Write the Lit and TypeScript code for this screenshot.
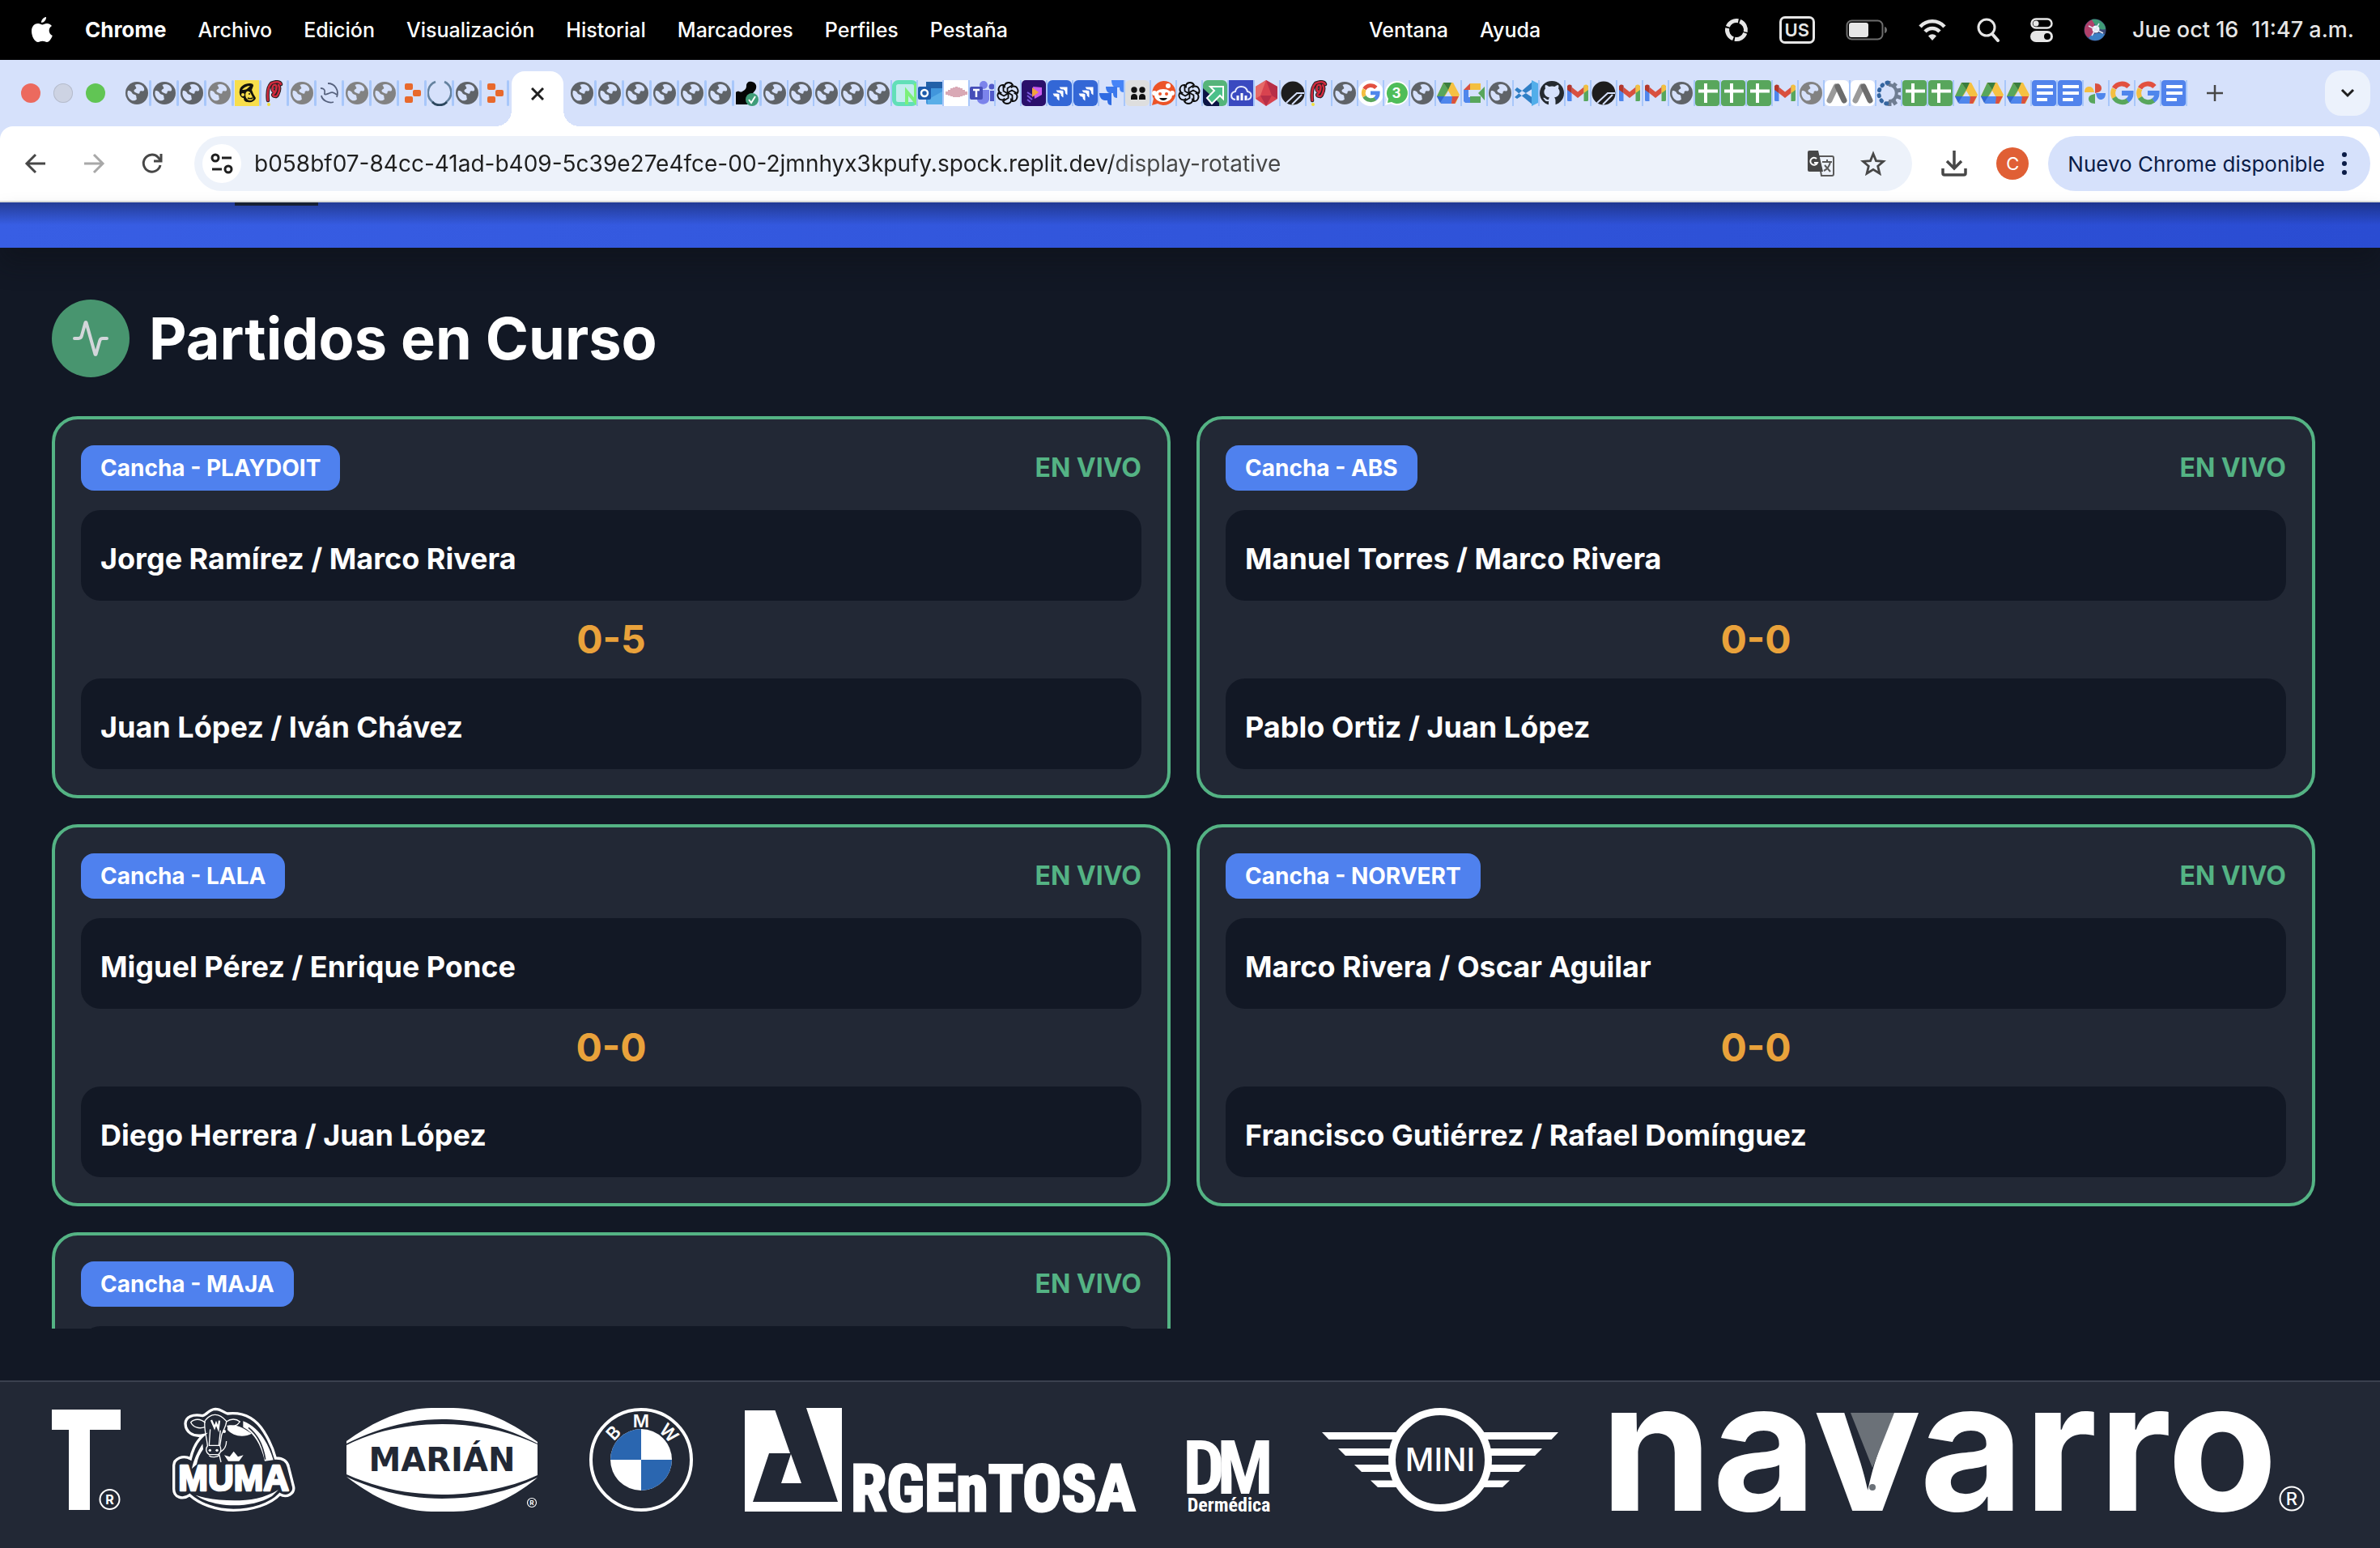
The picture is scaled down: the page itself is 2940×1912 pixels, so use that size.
import { LitElement, html, svg, css, type TemplateResult } from "lit";
import { customElement, property } from "lit/decorators.js";

type Glyph = TemplateResult;

const globe = (fill: string) => svg`
  <circle cx="15" cy="16" r="14" fill=${fill} />
  <path d="M4 13c2 0 4 .5 5 2.500s2 2 4 2.500c2 1 1 3 2 5.500-2 2-5 2.500-7 1C4 22 2.500 17 4 13z" fill="#d6e1fb" />
  <path d="M12.500 6c4-2 9-.5 11 3 1.500 3 .5 5-2 4.500-2-.5-3 .5-3 2s-2 1.500-3.500.5-3-1-3.500-2.500 1.500-2.500 2.500-3-.5-2.500-1.500-4.500z" fill="#d6e1fb" />`;

const gmail = svg`
  <path d="M2 7h5.500v19H3.500A1.500 1.500 0 0 1 2 24.500z" fill="#4f86ec" />
  <path d="M22.500 7H28v17.500a1.500 1.500 0 0 1-1.500 1.500h-4z" fill="#58a65c" />
  <path d="M7.500 8.500 15 14.500l7.500-6V16L15 22l-7.500-6z" fill="#d9503f" />
  <path d="M2 8c0-2.500 3-3.500 5.500-1.500V16L2 12z" fill="#b4372b" />
  <path d="M28 8c0-2.500-3-3.500-5.500-1.500V16l5.500-4z" fill="#f2bf42" />`;

const sheets = svg`
  <rect width="30" height="32" rx="4" fill="#58a65c" />
  <path d="M13 4v24M4 13.500h24" stroke="#fff" stroke-width="4" />`;

const docs = svg`
  <rect width="30" height="32" rx="4" fill="#5183ec" />
  <path d="M6 8h20M6 16h20M6 24h13" stroke="#fff" stroke-width="4" />`;

const drive = svg`
  <path d="M9 3h12l8 15-5 11H6L1 20z" fill="#f6c142" />
  <path d="M9 3 15 12 10 20H1z" fill="#58a65c" />
  <path d="M9 3h10l-4 9z" fill="#3a7d3e" />
  <path d="M10 20h-9l5 9h13l2-9z" fill="#4f86ec" />
  <path d="M20 20h8l-5 9h-4z" fill="#d9503f" />
  <path d="M1 20h9l-5 8z" fill="#3268d0" />
  <path d="M15 13l4 7h-8z" fill="#d6e1fb" />`;

const google = svg`
  <g fill="none" stroke-width="6">
    <path d="M5.500 10A11.500 11.500 0 0 1 23.500 8" stroke="#e2503f" />
    <path d="M5.500 10.500a12 12 0 0 0 0 11" stroke="#f4bf40" />
    <path d="M5.500 21.500a12 12 0 0 0 17 3.500" stroke="#58a65c" />
    <path d="M15 16h11.500c0 4-1.500 7-4.500 9.200" stroke="#4f86ec" />
  </g>`;

const openai = svg`
  <g fill="none" stroke="#0b0b0b" stroke-width="1.800">
    ${[0, 60, 120, 180, 240, 300].map(
      (a) => svg`<path d="M11 9.500V6c2-4 8-4 10 0l-6.500 4v6" transform=${`rotate(${a} 15 16)`} />`
    )}
  </g>`;

const pinwheel = svg`
  <path d="M14 4c6 0 8 3 8 6s-2 5-8 6z" fill="#d9503f" />
  <path d="M27 16c0 6-3 8-6 8s-5-2-6-8z" fill="#4f86ec" />
  <path d="M14 29c-6 0-8-3-8-6s2-5 8-6z" fill="#58a65c" />
  <path d="M1 15c0-6 3-7 6-7s5 2 6 7z" fill="#f4bf40" />`;

const jira = svg`
  <rect width="30" height="32" rx="6" fill="#3367d6" />
  <path d="M14 8h11v11c-3-1-4-3-4-6-4 0-6-2-7-5zM10 12h10v10c-3-1-4-3-4-5-3 0-5-2-6-5zM6 16h9v10c-3-1-4-3-4-5-3 0-4-2-5-5z" fill="#fff" stroke="#3367d6" />`;

const jiraOpen = svg`
  <path d="M15 0h15v15c-4 0-5-3-5-6h-4c-4 0-6-4-6-9z" fill="#4684f7" />
  <path d="M8 8h14v14c-4 0-5-3-5-6h-4c-3 0-5-4-5-8z" fill="#3b78ec" />
  <path d="M0 16h15v15c-4 0-5-3-5-6H7c-4 0-7-4-7-9z" fill="#2f6be2" />`;

const ball = svg`
  <circle cx="15" cy="16" r="14.500" fill="#1d1d1d" />
  <path d="M7 28 20 16h9M14 30l12-12" stroke="#d6e1fb" stroke-width="2" fill="none" />`;

const redP = svg`
  <path d="M7 25C6 16 7 8 11 4M11 4c6-3 11-2 12 1M14 14c-3-3-1-9 2-8s1 9-2 11 3 5 5 1 3-9 1-12" fill="none" stroke="#231f20" stroke-width="4.500" stroke-linecap="round" />
  <path d="M7 25C6 16 7 8 11 4M11 4c6-3 11-2 12 1M14 14c-3-3-1-9 2-8s1 9-2 11 3 5 5 1 3-9 1-12" fill="none" stroke="#d02a3e" stroke-width="2.500" stroke-linecap="round" />
  <circle cx="8" cy="30" r="2" fill="#f2e13c" />`;

const replit = svg`
  <g fill="#e8692c">
    <rect x="6" y="4" width="10" height="8" rx="2" />
    <rect x="16" y="12" width="10" height="8" rx="2" />
    <rect x="6" y="20" width="10" height="8" rx="2" />
  </g>`;

const arrowhead = svg`
  <rect width="30" height="32" rx="6" fill="#fff" />
  <path d="M6 25 14 8" stroke="#9a9a9a" stroke-width="7" stroke-linecap="round" />
  <path d="M16 8l8 17" stroke="#6c6c6c" stroke-width="7" stroke-linecap="round" />`;

const ICONS: Record<string, Glyph> = {
  globe: globe("#5f6368"),
  globeOld: globe("#828282"),
  gmail,
  sheets,
  docs,
  drive,
  google,
  googleRound: svg`<circle cx="15" cy="16" r="16" fill="#fff" /><g transform="translate(3 3) scale(.8)">${google}</g>`,
  openai,
  pinwheel,
  jira,
  jiraOpen,
  ball,
  redP,
  replit,
  arrowhead,
  chimp: svg`
    <rect width="30" height="32" fill="#f8de4b" />
    <path d="M6 13c0-5 6-9 12-9 4 0 5 1 5 3l-2 5 2 5 3 5c-1 4-6 6-10 5-3 0-5-2-5-5-4 0-6-6-5-9z" fill="#14130c" />
    <path d="M9 12c2-3 6-5 10-5l-3 3c-2 2-5 2-7 2z" fill="#f8de4b" />
    <path d="M15 14c3-1 4 1 5 3l3 6c-1 2-5 3-7 1-3-2-4-8-1-10z" fill="#f8de4b" />
    <circle cx="10" cy="18" r="2" fill="#f8de4b" />
    <path d="M16 22c2 1 4 1 6 0M18 16v2" stroke="#14130c" stroke-width="1.500" />`,
  squiggle: svg`
    <g fill="none" stroke="#56617d" stroke-width="1.800">
      <path d="M4 10c4 0 6 2 5 6-1 3 3 1 6 0 4-2 6 0 9 2" />
      <path d="M13 4c9 0 14 9 11 17M5 19c1 6 9 10 15 8" />
    </g>`,
  ring: svg`
    <path d="M10 2A14.500 14.500 0 0 0 8 28M21 2a14.500 14.500 0 0 1 2 25" fill="none" stroke="#64829f" stroke-width="2.500" />
    <path d="M6 27c5 5 13 5 18 0" fill="none" stroke="#2c475e" stroke-width="3" />`,
  wrench: svg`
    <path d="M1 15c4-3 5 1 8-1s5-3 5-7 3-6 7-5 6 4 5 8-5 6-6 9v11H1z" fill="#050505" />
    <circle cx="21" cy="24" r="8" fill="#3f9c78" />
    <path d="M17 24l3 4 5-8" fill="none" stroke="#fff" stroke-width="2" />`,
  neon: svg`
    <rect x="2.500" y="2.500" width="27" height="27" rx="5" fill="#c3ecef" stroke="#62dfb8" stroke-width="5" />
    <path d="M18 30V14l11 13V4" fill="none" stroke="#7bf07b" stroke-width="4" />`,
  outlook: svg`
    <rect x="10" y="2" width="20" height="28" rx="2" fill="#4196dc" />
    <path d="M10 2h20v8H10z" fill="#2361a8" />
    <path d="M30 14 12 24v6h18z" fill="#59aee8" />
    <rect y="8" width="16" height="16" rx="2" fill="#1d5aab" />
    <circle cx="8" cy="16" r="4" fill="none" stroke="#fff" stroke-width="2.500" />`,
  bars: svg`
    <rect width="30" height="32" fill="#fff" />
    <path d="M2 14h3v4H2zM5 12h3v7H5zM8 10h3v10H8zM11 9h3v12h-3zM14 8h3v13h-3zM17 9h3v12h-3zM20 10h3v10h-3zM23 12h3v7h-3zM26 14h3v4h-3z" fill="#d9a9b5" />`,
  teams: svg`
    <circle cx="17" cy="6" r="5" fill="#7b83eb" />
    <circle cx="27" cy="8" r="3.500" fill="#5059c9" />
    <path d="M9 12h15v12c-2 8-14 7-15 0z" fill="#7b83eb" />
    <path d="M25 13h5v13h-5z" fill="#5059c9" />
    <rect y="8" width="16" height="16" rx="2" fill="#464eb8" />
    <path d="M4 12h8M8 12v9" stroke="#fff" stroke-width="2.500" />`,
  play: svg`
    <rect width="30" height="32" rx="5" fill="#2a0f6b" />
    <path d="M14 8l11 1 0 9-9 5z" fill="#c95af0" />
    <path d="M13 9l8 6-8 6z" fill="#f2a33c" />
    <path d="M7 15l6 4M7 19l6 5M7 24l4 3" stroke="#7c5ae0" stroke-width="2" />`,
  people: svg`
    <rect width="30" height="32" rx="6" fill="#dedede" />
    <g fill="#111"><circle cx="11" cy="12" r="3.700" /><circle cx="21" cy="12" r="3.700" /><path d="M7 24v-3a4 4 0 0 1 8 0v3zM17 24v-3a4 4 0 0 1 8 0v3z" /></g>`,
  reddit: svg`
    <path d="M15 1a15 15 0 1 1-7 28l-7 2 2-8A15 15 0 0 1 15 1z" fill="#ec5429" />
    <ellipse cx="15" cy="19" rx="11" ry="8" fill="#fff" />
    <circle cx="21" cy="7" r="3" fill="#fff" /><circle cx="4" cy="16" r="3" fill="#fff" /><circle cx="26" cy="16" r="3" fill="#fff" />
    <circle cx="11" cy="17" r="2" fill="#ec5429" /><circle cx="19" cy="17" r="2" fill="#ec5429" />
    <path d="M10 22h10c-2 4-8 4-10 0z" fill="#111" />`,
  arrow: svg`
    <rect width="30" height="32" rx="6" fill="#55b47a" />
    <path d="M0 10 20 28v4H6a6 6 0 0 1-6-6z" fill="#0c1445" />
    <path d="M9 8h16v15l-4-4-10 10-6-7 9-9z" fill="#4cc08a" stroke="#fff" stroke-width="2" />`,
  cloud: svg`
    <rect width="30" height="32" fill="#3a49c0" />
    <path d="M8 24c-7-1-6-9 0-10 1-8 13-8 15 0 6 1 6 9 0 10" fill="none" stroke="#e8ebff" stroke-width="2" />
    <path d="M11 25v-6M16 25v-9M21 25v-6" stroke="#fff" stroke-width="3" />`,
  gem: svg`
    <path d="M14 0 28 8v15L14 32 1 23V8z" fill="#d8434f" />
    <path d="M14 0l7 19 7 4V8zM14 32l7-13H7z" fill="#b72f48" />
    <path d="M14 0 7 19 1 23V8z" fill="#e66a68" />`,
  chat: svg`
    <path d="M15 1a15 15 0 1 1-7 28l-7 2 2-7A15 15 0 0 1 15 1z" fill="#fff" />
    <path d="M15 3a13 13 0 1 1-6 24l-5 1 1-5A13 13 0 0 1 15 3z" fill="#4fbd59" />
    <text x="15" y="22" text-anchor="middle" font-size="17" font-weight="700" fill="#fff">3</text>`,
  meet: svg`
    <path d="M2 12 10 4v8z" fill="#d9503f" />
    <path d="M10 4h13v8H10z" fill="#f4bf40" />
    <path d="M2 12h6v9H2zM2 21h8v7H4l-2-2z" fill="#4f86ec" />
    <path d="M10 20h13v8H10zM20 16l8-8v17z" fill="#58a65c" />`,
  code: svg`
    <path d="M1 12 24 31v-9L4 9zM1 21 24 1v9L4 23z" fill="#2f7fc6" />
    <path d="M22 0l8 4v24l-8 4z" fill="#52aeea" />`,
  octocat: svg`
    <circle cx="15" cy="16" r="15" fill="#24292f" />
    <path d="M11 31v-5c-5 1-5-3-7-4 3-1 4 3 7 2 0-1 .5-2 1-2.500-7-1-8-8-5-11-.5-2-.5-3 0-4.500 2 0 3.500 1.500 4.500 2 2.500-.7 5-.7 7 0 1-.5 2.500-2 4.500-2 .5 1.500.5 2.500 0 4.500 3 3 2 10-5 11 1 1 1.500 2 1.500 4V31z" fill="#d6e1fb" />`,
  gear: svg`
    <path d="M15 6c13-1 13 21 0 20" fill="none" stroke="#6f7d92" stroke-width="4" />
    <path d="M15 1v6M24 4l-4 5M31 12l-6 1M31 22l-6-2M24 30l-4-6M16 32v-6" stroke="#6f7d92" stroke-width="5" />
    <path d="M14 3C-1 6 0 27 13 29" fill="none" stroke="#34659f" stroke-width="5" stroke-dasharray="1 6" stroke-linecap="round" />`,
};

const repeatName = (name: string, n: number) => Array.from({ length: n }, () => name);

const LEFT_TABS = [
  ...repeatName("globe", 3), "globeOld", "chimp", "redP", "globeOld", "squiggle",
  "globeOld", "globeOld", "replit", "ring", "globe", "replit",
];
const MIDDLE_TABS = [...repeatName("globe", 6), "wrench"];
const RIGHT_TABS = [
  ...repeatName("globe", 5), "neon", "outlook", "bars", "teams", "openai", "play", "jira", "jira",
  "jiraOpen", "people", "reddit", "openai", "arrow", "cloud", "gem", "ball", "redP", "globe",
  "googleRound", "chat", "globe", "drive", "meet", "globe", "code", "octocat", "gmail", "ball",
  "gmail", "gmail", "globe", "sheets", "sheets", "sheets", "gmail", "globeOld", "arrowhead",
  "arrowhead", "gear", "sheets", "sheets", "drive", "drive", "drive", "docs", "docs", "pinwheel",
  "google", "google", "docs",
];

@customElement("mac-menu-bar")
class MacMenuBar extends LitElement {
  static styles = css`
    :host { display: block; background: #000; color: #fff; }
    .bar { display: flex; align-items: center; height: 74px; padding: 0 32px 0 38px; font: 500 25px/32px Inter, sans-serif; }
    .menus { display: flex; align-items: center; gap: 39px; }
    .menus button { font: inherit; color: inherit; background: none; border: 0; padding: 0; }
    .menus .app { font-weight: 700; font-size: 26px; }
    .apple { display: block; }
    .notch { flex: 1; max-width: 446px; }
    .status { display: flex; align-items: center; gap: 32px; margin-left: auto; color: #e6e6e6; }
    .status svg { display: block; }
    .extras { display: flex; align-items: center; gap: 38px; }
    .layout { border: 3px solid #e6e6e6; border-radius: 7px; font-size: 22px; line-height: 28px; padding: 0 4px; font-weight: 600; }
    .clock { display: flex; gap: 16px; font-size: 27px; }
  `;
  render() {
    const left = ["Archivo", "Edición", "Visualización", "Historial", "Marcadores", "Perfiles", "Pestaña"];
    return html`
      <nav class="bar" aria-label="Menú">
        <div class="menus">
          <svg class="apple" width="28" height="32" viewBox="0 0 28 32" fill="#fff">
            <path d="M19 0c.4 3.500-2.700 7-6 7C12.600 3.800 15.800.5 19 0z" />
            <path d="M26 11c-5 3-4 10 .8 12-1.200 3.500-4 8-6.800 8-2 0-3-1.200-5.500-1.200S11 31 9 31C5 31 1 24 1 17.500S5 8 9 8c2.200 0 4 1.400 5.300 1.400S17.500 8 20 8c2.200 0 4.500 1 6 3z" />
          </svg>
          <button class="app">Chrome</button>
          ${left.map((m) => html`<button>${m}</button>`)}
        </div>
        <div class="notch"></div>
        <div class="menus"><button>Ventana</button><button>Ayuda</button></div>
        <div class="status">
          <div class="extras">
            <svg width="30" height="30" viewBox="0 0 30 30"><circle cx="15" cy="15" r="11.500" fill="none" stroke="#e6e6e6" stroke-width="5" stroke-dasharray="16 2.060" transform="rotate(20 15 15)" /></svg>
            <span class="layout">US</span>
            <svg width="52" height="26" viewBox="0 0 52 26">
              <rect x="1.500" y="1.500" width="44" height="23" rx="6" fill="none" stroke="#6d6d6d" stroke-width="2" />
              <rect x="4" y="4" width="24" height="18" rx="3" fill="#e6e6e6" /><path d="M48 9c4 1 4 7 0 8z" fill="#6d6d6d" />
            </svg>
            <svg width="34" height="28" viewBox="0 0 34 28" fill="none" stroke="#e6e6e6" stroke-width="4.500">
              <path d="M2 10c8-9 22-9 30 0M8 16c5-5.500 13-5.500 18 0" /><path d="M17 27l-5-5.500c3-3 7-3 10 0z" fill="#e6e6e6" stroke="none" />
            </svg>
            <svg width="28" height="30" viewBox="0 0 28 30" fill="none" stroke="#e6e6e6" stroke-width="3"><circle cx="12" cy="12" r="10" /><path d="M19 20l7 8" stroke-width="4" stroke-linecap="round" /></svg>
            <svg width="28" height="30" viewBox="0 0 28 30">
              <rect x="1.500" y="1.500" width="25" height="11" rx="5.500" fill="none" stroke="#e6e6e6" stroke-width="2.500" /><circle cx="7" cy="7" r="3.500" fill="#e6e6e6" />
              <rect y="16" width="28" height="14" rx="7" fill="#e6e6e6" /><circle cx="21" cy="23" r="4" fill="#000" />
            </svg>
            <svg width="28" height="30" viewBox="0 0 28 30">
              <circle cx="14" cy="15" r="13.500" fill="#3c4a78" /><path d="M1 15a13 13 0 0 1 12-13v24C6 26 1 22 1 15z" fill="#b0406a" />
              <path d="M10 2c10-2 17 6 17 12-6 2-12-2-17-12z" fill="#3f9a76" /><path d="M6 25c6-8 16-6 20-5-4 9-14 10-20 5z" fill="#3b7fc4" />
              <circle cx="15" cy="14" r="4.500" fill="#f4f6fb" /><path d="M6 10l18 9M10 22l9-15" stroke="#dfe6f5" stroke-width="1.500" />
            </svg>
          </div>
          <time class="clock"><span>Jue oct 16</span><span>11:47 a.m.</span></time>
        </div>
      </nav>
    `;
  }
}

@customElement("browser-chrome")
class BrowserChrome extends LitElement {
  static styles = css`
    :host { display: block; background: #d6e1fb; font-family: Inter, sans-serif; border-bottom: 2px solid #dfe1df; }
    button { font: inherit; color: inherit; background: none; border: 0; padding: 0; display: block; }
    svg { display: block; }
    .strip { display: flex; height: 82px; padding: 0 12px 0 26px; align-items: center; }
    .lights { display: flex; gap: 16px; margin-right: 24px; }
    .light { width: 24px; height: 24px; border-radius: 50%; }
    .close { background: #ec6a5e; }
    .minimize { background: #cdd3e3; box-shadow: inset 0 0 0 1px #b5bccd; }
    .zoom { background: #61c554; }
    .tabs { display: flex; align-items: center; }
    .tab { display: flex; flex: none; }
    .tab::after { content: ""; width: 2px; height: 32px; background: #a8c7fa; }
    .tab.wide::after { width: 3px; margin-right: 1px; border-radius: 2px; }
    .active { position: relative; align-self: flex-end; width: 64px; height: 68px; margin: 0 8px 0 2px; border-radius: 16px 16px 0 0; background: #fff; display: grid; place-items: center; padding-bottom: 12px; box-sizing: border-box; }
    .active::before, .active::after { content: ""; position: absolute; bottom: 0; width: 20px; height: 20px; }
    .active::before { right: 100%; background: radial-gradient(circle at 0 0, transparent 20px, #fff 20px); }
    .active::after { left: 100%; background: radial-gradient(circle at 100% 0, transparent 20px, #fff 20px); }
    .plus { margin-left: 24px; }
    .search { margin-left: auto; width: 56px; height: 56px; border-radius: 20px; background: #ecf2fc; display: grid; place-items: center; }
    .toolbar { display: flex; align-items: center; height: 92px; padding: 0 12px 0 30px; background: #fff; border-radius: 16px 16px 0 0; }
    .nav { display: flex; gap: 44px; margin-right: 38px; }
    .omnibox { display: flex; flex: 1; align-items: center; height: 68px; border-radius: 34px; background: #edf2fa; padding: 0 32px 0 10px; }
    .site { width: 48px; height: 48px; border-radius: 50%; background: #fff; display: grid; place-items: center; margin-right: 16px; }
    .url { flex: 1; min-width: 0; border: 0; outline: 0; padding: 0; height: 40px; font: 400 28px/40px Inter, sans-serif; color: transparent; background: linear-gradient(90deg, #1f1f1f 1060px, #474747 1060px); -webkit-background-clip: text; background-clip: text; }
    .actions { display: flex; gap: 32px; }
    .download { margin: 0 36px; }
    .avatar { width: 40px; height: 40px; border-radius: 50%; background: #e05f35; color: #fff; font-size: 22px; line-height: 40px; margin-right: 24px; }
    .update { display: flex; align-items: center; gap: 20px; height: 68px; border-radius: 34px; background: #d6e1fb; color: #0b1c47; padding: 0 28px 0 24px; font-size: 26px; }
  `;

  private tab(name: string, wide: boolean) {
    return html`<button class="tab ${wide ? "wide" : ""}" aria-label="Pestaña"><svg width="30" height="32" viewBox="0 0 30 32">${ICONS[name]}</svg></button>`;
  }

  render() {
    return html`
      <div class="strip">
        <div class="lights"><span class="light close"></span><span class="light minimize"></span><span class="light zoom"></span></div>
        <div class="tabs">${LEFT_TABS.map((t) => this.tab(t, true))}</div>
        <button class="active" aria-label="Cerrar pestaña">
          <svg width="16" height="16" viewBox="0 0 16 16" stroke="#1f1f1f" stroke-width="3"><path d="M1 1l14 14M15 1 1 15" /></svg>
        </button>
        <div class="tabs">${MIDDLE_TABS.map((t) => this.tab(t, true))}${RIGHT_TABS.map((t) => this.tab(t, false))}</div>
        <button class="plus" aria-label="Nueva pestaña">
          <svg width="20" height="20" viewBox="0 0 20 20" stroke="#474747" stroke-width="2.500"><path d="M10 0v20M0 10h20" /></svg>
        </button>
        <button class="search" aria-label="Buscar pestañas">
          <svg width="18" height="12" viewBox="0 0 18 12" fill="none" stroke="#1f1f1f" stroke-width="3"><path d="M2 2l7 7 7-7" /></svg>
        </button>
      </div>
      <div class="toolbar">
        <div class="nav">
          <button aria-label="Atrás"><svg width="28" height="28" viewBox="0 0 28 28" fill="none" stroke="#474747" stroke-width="3"><path d="M26 14H4M14 3 3 14l11 11" /></svg></button>
          <button aria-label="Adelante"><svg width="28" height="28" viewBox="0 0 28 28" fill="none" stroke="#a8a8a8" stroke-width="3"><path d="M2 14h22M14 3l11 11-11 11" /></svg></button>
          <button aria-label="Recargar"><svg width="28" height="28" viewBox="0 0 28 28" fill="none" stroke="#474747" stroke-width="3"><path d="M24 16a10.500 10.500 0 1 1-3-10l3.500 4" /><path d="M25 2v9h-9" /></svg></button>
        </div>
        <div class="omnibox">
          <button class="site" aria-label="Información del sitio">
            <svg width="28" height="26" viewBox="0 0 28 26" fill="none" stroke="#1f1f1f" stroke-width="3"><circle cx="6" cy="6" r="4" /><path d="M14 6h12M2 20h12" /><circle cx="22" cy="20" r="4" /></svg>
          </button>
          <input class="url" aria-label="Dirección" value="b058bf07-84cc-41ad-b409-5c39e27e4fce-00-2jmnhyx3kpufy.spock.replit.dev/display-rotative" />
          <div class="actions">
            <button aria-label="Traducir">
              <svg width="34" height="34" viewBox="0 0 34 34" fill="none">
                <path d="M14 8h17a2 2 0 0 1 2 2v20a2 2 0 0 1-2 2H18z" stroke="#5a5a5a" stroke-width="2" />
                <path d="M3 1h11l6 26H3a2 2 0 0 1-2-2V3a2 2 0 0 1 2-2z" fill="#474747" />
                <path d="M12 11a4.500 4.500 0 1 0 1 5H9" stroke="#fff" stroke-width="2" />
                <path d="M19 15h12M25 12v3M29 15c-1 5-4 9-8 11M22 19l7 8" stroke="#5a5a5a" stroke-width="2" />
              </svg>
            </button>
            <button aria-label="Marcar"><svg width="32" height="32" viewBox="0 0 32 32" fill="none" stroke="#474747" stroke-width="2.800"><path d="M16 4l3.500 8.600 9.200.7-7 6 2.200 9L16 23.400 8.100 28.300l2.200-9-7-6 9.200-.7z" /></svg></button>
          </div>
        </div>
        <button class="download" aria-label="Descargas"><svg width="32" height="32" viewBox="0 0 32 32" fill="none" stroke="#474747" stroke-width="3.500"><path d="M16 0v21M7 13l9 9 9-9M2 22v6a2 2 0 0 0 2 2h24a2 2 0 0 0 2-2v-6" /></svg></button>
        <button class="avatar" aria-label="Perfil">C</button>
        <button class="update">
          Nuevo Chrome disponible
          <svg width="8" height="28" viewBox="0 0 8 28" fill="#0b1c47"><circle cx="4" cy="3" r="3" /><circle cx="4" cy="14" r="3" /><circle cx="4" cy="25" r="3" /></svg>
        </button>
      </div>
    `;
  }
}

@customElement("match-card")
class MatchCard extends LitElement {
  static styles = css`
    :host { display: block; background: #222835; border: 4px solid #54b384; border-radius: 32px; padding: 32px; }
    .top { display: flex; justify-content: space-between; align-items: center; margin-bottom: 24px; }
    .court { background: #4f81ee; color: #fff; border-radius: 16px; padding: 8px 24px; font-size: 28px; line-height: 40px; font-weight: 700; }
    .live { color: #54b384; font-size: 32px; line-height: 48px; font-weight: 700; }
    .team { background: #121825; border-radius: 24px; padding: 32px 24px 24px; font-size: 36px; line-height: 56px; font-weight: 700; color: #fff; }
    .score { text-align: center; color: #e9a23b; font-size: 48px; line-height: 64px; font-weight: 700; padding: 16px 0; }
  `;
  @property() court = "";
  @property() home = "";
  @property() away = "";
  @property() score = "";
  render() {
    return html`
      <div class="top"><span class="court">Cancha - ${this.court}</span><span class="live">EN VIVO</span></div>
      <div class="team">${this.home}</div>
      <div class="score">${this.score}</div>
      <div class="team">${this.away}</div>
    `;
  }
}

@customElement("sponsor-strip")
class SponsorStrip extends LitElement {
  static styles = css`
    :host { display: block; border-top: 2px solid #3a404e; background: #222835; }
    .row { display: flex; align-items: flex-end; gap: 64px; padding: 32px 64px 45px; }
    svg { display: block; flex: none; overflow: visible; }
    text { fill: #fff; }
    .sans { font-family: Inter, sans-serif; }
    .narrow { font-family: "Liberation Sans Narrow", "Roboto Condensed", "Liberation Sans", sans-serif; font-weight: 700; }
    .flared { font-family: "DejaVu Sans", sans-serif; font-weight: 700; fill: #222835; }
    .round { font-family: "Liberation Sans", sans-serif; font-weight: 700; }
    .navarro { font-family: Inter, sans-serif; font-weight: 700; }
  `;
  render() {
    return html`
      <footer class="row">
        <svg width="85" height="128" viewBox="0 0 85 128" role="img" aria-label="T">
          <rect y="2" width="85" height="25" fill="#fff" /><rect x="21" y="2" width="26" height="124" fill="#fff" />
          <circle cx="71.500" cy="113" r="12" fill="none" stroke="#fff" stroke-width="2" />
          <text class="sans" x="71.500" y="119" text-anchor="middle" font-size="16" font-weight="700">R</text>
        </svg>
        <svg width="151" height="128" viewBox="36 27 453 384" role="img" aria-label="Muma">
          <path d="M150 128C110 136 85 115 84 85c1-25 26-36 64-29 17-4 22-24 47-25 20 0 30 12 45 17 70-8 110 27 135 67 25 40 37 75 43 98 27-1 44 12 48 32l19 75c4 25-26 42-51 27-35 38-105 59-172 59-62 0-122-21-162-56-25 18-60 10-59-25v-85c1-25 34-40 62-25 7-30 22-65 47-87z" fill="none" stroke="#fff" stroke-width="10" />
          <path d="M298 76c52 20 90 70 112 144l-32 4c-14-60-38-104-80-126z" fill="#fff" />
          <path d="M318 100c34 26 54 66 62 118" fill="none" stroke="#222835" stroke-width="5" />
          <path d="M240 92c40-6 60 12 90 30-30 16-70 10-90-14z" fill="#fff" />
          <path d="M148 160c-20 30-34 62-40 92l18-16c4-22 12-40 24-56zM122 350c40 14 90 20 143 20 60 0 110-8 164-40l-24 24c-40 24-90 34-140 34-56 0-110-14-143-38z" fill="#fff" />
          <g fill="none" stroke="#fff" stroke-width="4">
            <path d="M156 76c8-14 24-24 38-24s30 10 42 24c0 20-14 36-18 52l-6 40c6 12 4 26-6 32h-34c-12-8-14-22-6-32-2-30-14-60-10-92z" />
            <path d="M158 82c-18-16-40-16-54-2 8 18 30 26 52 18M236 78c16-12 36-12 50 0-8 14-28 22-48 16M176 106l-4 60h36l6-56M172 204c10 8 30 6 38-2l6 26M236 150c0 22-8 32-22 40" />
            <path d="M180 72l12 28 6-16 8 20 4-30" stroke-width="7" />
          </g>
          <circle cx="175" cy="184" r="5" fill="#fff" /><circle cx="201" cy="184" r="5" fill="#fff" /><circle cx="228" cy="114" r="6" fill="#fff" />
          <path d="M228 202l20 6 15-20 16 20 20-6-16 22h-40z" fill="#fff" />
          <text class="round" x="263" y="334" text-anchor="middle" font-size="132" stroke="#fff" stroke-width="8" stroke-linejoin="round">MUMA</text>
        </svg>
        <svg width="236" height="128" viewBox="0 0 236 128" role="img" aria-label="Marián">
          <path d="M0 41C40 12 75 0 105 0h27c33 0 68 14 104 42v2C190 20 150 14 118 14 80 14 40 24 0 44zM0 46C40 26 80 20 118 20c42 0 82 8 118 25v38c-36 17-81 24-118 24-38 0-78-7-118-25zM0 85c40 19 80 27 118 27 42 0 82-8 118-26-36 30-71 42-104 42h-27C75 128 40 116 0 85z" fill="#fff" />
          <text class="flared" x="118" y="78" text-anchor="middle" font-size="40">MARIÁN</text>
          <circle cx="229" cy="117" r="5.500" fill="none" stroke="#fff" stroke-width="1.200" />
          <text class="sans" x="229" y="120" text-anchor="middle" font-size="8" font-weight="700">R</text>
        </svg>
        <svg width="128" height="128" viewBox="0 0 128 128" role="img" aria-label="BMW">
          <circle cx="64" cy="64" r="62" fill="none" stroke="#fff" stroke-width="4" />
          <circle cx="64" cy="64" r="38" fill="#fff" />
          <path d="M64 64V26a38 38 0 0 0-38 38zM64 64v38a38 38 0 0 0 38-38z" fill="#2a66b0" />
          <g class="sans" font-size="22" font-weight="600" text-anchor="middle">
            <text x="64" y="24" transform="rotate(-46 64 64)">B</text>
            <text x="64" y="24">M</text>
            <text x="64" y="24" transform="rotate(46 64 64)">W</text>
          </g>
        </svg>
        <svg width="483" height="128" viewBox="0 0 483 128" role="img" aria-label="Argentosa">
          <path d="M0 3h37.500L56 56H30L10 116h105L76 0h44v128H0zM57 57l13 36H45z" fill="#fff" />
          <text class="narrow" x="131" y="127" font-size="80" stroke="#fff" stroke-width="3">RGEnTOSA</text>
        </svg>
        <svg width="102" height="88" viewBox="0 0 102 88" role="img" aria-label="DM Dermédica">
          <text class="narrow" x="-6" y="66" font-size="92">D</text>
          <text class="narrow" x="106" y="66" text-anchor="end" font-size="92">M</text>
          <text class="narrow" x="51" y="88" text-anchor="middle" font-size="24">Dermédica</text>
        </svg>
        <svg width="292" height="128" viewBox="0 0 292 128" role="img" aria-label="Mini">
          <circle cx="146" cy="64" r="59.500" fill="none" stroke="#fff" stroke-width="9" />
          <path d="M0 30h93l-4 9H8.500zM20 50h65l-1 9H29zM40 70h44l1 9H49zM60 89.500h29l5 8.500H69zM292 30h-93l4 9h80.500zM272 50h-65l1 9h55zM252 70h-44l-1 9h36zM232 89.500h-29l-5 8.500h25z" fill="#fff" />
          <text class="sans" x="146" y="78" text-anchor="middle" font-size="39" font-weight="500">MINI</text>
        </svg>
        <svg width="858" height="128" viewBox="0 0 858 128" role="img" aria-label="Navarro">
          <text class="navarro" x="-12" y="127" font-size="222">navarro</text>
          <path d="M297 6h54l-27 68z" fill="#6b7178" /><circle cx="324" cy="98" r="4" fill="#6b7178" />
          <circle cx="842" cy="112" r="14.500" fill="none" stroke="#fff" stroke-width="2" />
          <text class="sans" x="842" y="120" text-anchor="middle" font-size="22" font-weight="500">R</text>
        </svg>
      </footer>
    `;
  }
}

@customElement("app-root")
class AppRoot extends LitElement {
  static styles = css`
    :host { display: flex; flex-direction: column; height: 100vh; overflow: hidden; background: #121825; font-family: Inter, sans-serif; color: #fff; }
    .banner { position: relative; height: 56px; flex: none; padding-left: 290px; box-sizing: border-box; background: linear-gradient(180deg, rgba(16, 28, 74, 0.5), rgba(16, 28, 74, 0) 28px), linear-gradient(90deg, #385ee4, #2a4cd2); box-shadow: 0 20px 30px rgba(12, 14, 20, 0.4); }
    .logo-edge { width: 103px; height: 4px; background: #172033; }
    .stage { flex: 1; min-height: 0; padding: 64px 80px 64px 64px; display: flex; }
    .viewport { flex: 1; overflow: hidden; }
    .title { display: flex; align-items: center; gap: 24px; margin-bottom: 48px; }
    .pulse { width: 96px; height: 96px; border-radius: 50%; background: #48956f; display: grid; place-items: center; }
    h1 { margin: 0; font-size: 72px; line-height: 80px; font-weight: 700; }
    .matches { display: grid; grid-template-columns: 1fr 1fr; gap: 32px; }
  `;
  private matches = [
    { court: "PLAYDOIT", home: "Jorge Ramírez / Marco Rivera", away: "Juan López / Iván Chávez", score: "0-5" },
    { court: "ABS", home: "Manuel Torres / Marco Rivera", away: "Pablo Ortiz / Juan López", score: "0-0" },
    { court: "LALA", home: "Miguel Pérez / Enrique Ponce", away: "Diego Herrera / Juan López", score: "0-0" },
    { court: "NORVERT", home: "Marco Rivera / Oscar Aguilar", away: "Francisco Gutiérrez / Rafael Domínguez", score: "0-0" },
    { court: "MAJA", home: "", away: "", score: "" },
  ];
  render() {
    return html`
      <mac-menu-bar></mac-menu-bar>
      <browser-chrome></browser-chrome>
      <div class="banner"><div class="logo-edge"></div></div>
      <main class="stage">
        <div class="viewport">
          <div class="title">
            <span class="pulse">
              <svg width="48" height="48" viewBox="0 0 24 24" fill="none" stroke="#d3d6da" stroke-width="2" stroke-linecap="round" stroke-linejoin="round"><path d="M22 12h-2.480a2 2 0 0 0-1.930 1.460l-2.350 8.360a.25.25 0 0 1-.480 0L9.240 2.180a.25.25 0 0 0-.480 0l-2.350 8.360A2 2 0 0 1 4.490 12H2" /></svg>
            </span>
            <h1>Partidos en Curso</h1>
          </div>
          <div class="matches">
            ${this.matches.map((m) => html`<match-card .court=${m.court} .home=${m.home} .away=${m.away} .score=${m.score}></match-card>`)}
          </div>
        </div>
      </main>
      <sponsor-strip></sponsor-strip>
    `;
  }
}
